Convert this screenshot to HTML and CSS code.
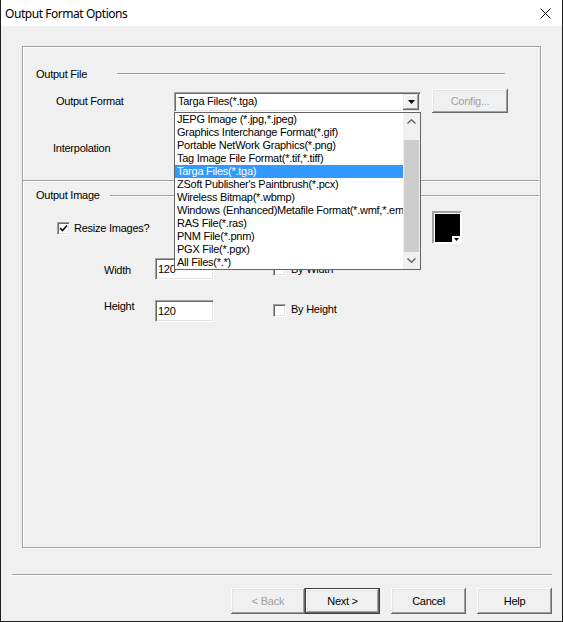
FILE: index.html
```html
<!DOCTYPE html>
<html>
<head>
<meta charset="utf-8">
<title>Output Format Options</title>
<link rel="stylesheet" href="styles.css">
</head>
<body>
<div class="window">
  <div class="titlebar">
    <span class="title">Output Format Options</span>
    <svg class="close" width="11" height="11" viewBox="0 0 11 11"><path d="M0.5 0.5 L10.5 10.5 M10.5 0.5 L0.5 10.5" stroke="#000" stroke-width="1" fill="none"/></svg>
  </div>
  <div class="client">
    <div class="frame">
      <div class="group group-file">
        <div class="heading"><span class="heading-text">Output File</span><span class="rule rule-file"></span></div>
        <div class="row row-format">
          <span class="label label-format">Output Format</span>
          <div class="combo">
            <span class="combo-text">Targa Files(*.tga)</span>
            <span class="combo-btn"><svg width="7" height="4" viewBox="0 0 7 4"><path d="M0 0 H7 L3.5 4 Z" fill="#000"/></svg></span>
            <div class="listbox">
              <ul class="items">
                <li>JEPG Image (*.jpg,*.jpeg)</li>
                <li>Graphics Interchange Format(*.gif)</li>
                <li>Portable NetWork Graphics(*.png)</li>
                <li>Tag Image File Format(*.tif,*.tiff)</li>
                <li class="selected">Targa Files(*.tga)</li>
                <li>ZSoft Publisher's Paintbrush(*.pcx)</li>
                <li>Wireless Bitmap(*.wbmp)</li>
                <li>Windows (Enhanced)Metafile Format(*.wmf,*.emf)</li>
                <li>RAS File(*.ras)</li>
                <li>PNM File(*.pnm)</li>
                <li>PGX File(*.pgx)</li>
                <li>All Files(*.*)</li>
              </ul>
              <div class="vscroll">
                <div class="sb-btn"><svg width="9" height="5" viewBox="0 0 9 5"><path d="M0.5 4.5 L4.5 0.8 L8.5 4.5" stroke="#606060" stroke-width="1.4" fill="none"/></svg></div>
                <div class="sb-track"><div class="sb-thumb"></div></div>
                <div class="sb-btn"><svg width="9" height="5" viewBox="0 0 9 5"><path d="M0.5 0.5 L4.5 4.2 L8.5 0.5" stroke="#606060" stroke-width="1.4" fill="none"/></svg></div>
              </div>
            </div>
          </div>
          <button class="btn btn-config" disabled>Config...</button>
        </div>
        <div class="row row-interp"><span class="label">Interpolation</span></div>
      </div>
      <div class="group group-image">
        <div class="heading"><span class="heading-text">Output Image</span><span class="rule rule-image"></span></div>
        <div class="row row-resize">
          <span class="check checked resize-check"><svg width="9" height="9" viewBox="0 0 9 9"><path d="M1 4 L3.5 6.5 L8 1.5" stroke="#000" stroke-width="1.6" fill="none"/></svg></span>
          <span class="check-label resize-label">Resize Images?</span>
          <span class="colorbox"><span class="color-notch"><svg width="5" height="3" viewBox="0 0 5 3"><path d="M0 0 H5 L2.5 3 Z" fill="#000"/></svg></span></span>
        </div>
        <div class="row row-width">
          <span class="label dim-label">Width</span>
          <span class="textbox">120</span>
          <span class="check dim-check"></span>
          <span class="check-label dim-check-label">By Width</span>
        </div>
        <div class="row row-height">
          <span class="label dim-label">Height</span>
          <span class="textbox">120</span>
          <span class="check dim-check"></span>
          <span class="check-label dim-check-label">By Height</span>
        </div>
      </div>
    </div>
    <div class="separator"></div>
    <div class="buttons">
      <button class="btn btn-back" disabled>&lt; Back</button>
      <button class="btn btn-default">Next &gt;</button>
      <button class="btn btn-cancel">Cancel</button>
      <button class="btn btn-help">Help</button>
    </div>
  </div>
</div>
</body>
</html>
```
FILE: styles.css
```css
* { box-sizing: border-box; }
html, body { margin: 0; padding: 0; background: #f0f0f0; }
.window {
  width: 563px;
  height: 622px;
  display: flex;
  flex-direction: column;
  background: #f0f0f0;
  border-left: 1px solid #1e1e1e;
  border-right: 1px solid #1e1e1e;
  border-bottom: 1px solid #1e1e1e;
  font-family: "Liberation Sans", Arial, sans-serif;
  font-size: 11px;
  letter-spacing: -0.25px;
  color: #000;
}
.titlebar {
  height: 26px;
  flex: none;
  background: #fff;
  display: flex;
  align-items: center;
  justify-content: space-between;
  padding-left: 4px;
}
.title {
  font-family: "Noto Sans", "Liberation Sans", sans-serif;
  font-size: 12px;
  letter-spacing: -0.45px;
}
.close { margin-right: 11px; display: block; }
.client { flex: 1; display: flex; flex-direction: column; }
.frame {
  margin: 20px 0 0 21px;
  width: 519px;
  height: 502px;
  border: 1px solid #a0a0a0;
  box-shadow: 1px 1px 0 #fff, inset 1px 1px 0 #fff;
  flex: none;
}
.group { width: 516px; }
.group-file {
  height: 134px;
  padding-top: 20px;
  border-bottom: 1px solid #a0a0a0;
  box-shadow: 0 1px 0 #fff;
}
.group-image { padding-top: 7px; }
.heading {
  display: flex;
  align-items: flex-start;
  height: 14px;
  padding-left: 13px;
  line-height: 14px;
}
.rule {
  height: 2px;
  margin-top: 6px;
  margin-left: auto;
  border-top: 1px solid #a0a0a0;
  border-bottom: 1px solid #fff;
}
.rule-file { width: 388px; margin-right: 34px; }
.rule-image { width: 429px; margin-top: 7px; }
.row { display: flex; align-items: flex-start; }
.row-format { margin-top: 8px; height: 24px; padding-left: 33px; }
.label-format { width: 118px; line-height: 24px; }
.combo {
  position: relative;
  margin-top: 3px;
  width: 247px;
  height: 20px;
  background: #fff;
  border: 1px solid;
  border-color: #a0a0a0 #fff #fff #a0a0a0;
  box-shadow: inset 1px 1px 0 #696969, inset -1px -1px 0 #e3e3e3;
  display: flex;
  align-items: flex-start;
}
.combo-text { flex: 1; padding-left: 3px; line-height: 17px; }
.combo-btn {
  width: 16px;
  height: 16px;
  margin: 1px 1px 0 0;
  background: #f0f0f0;
  box-shadow: inset -1px -1px 0 #696969, inset 1px 1px 0 #e3e3e3, inset -2px -2px 0 #a0a0a0, inset 2px 2px 0 #fff;
  display: flex;
  align-items: center;
  justify-content: center;
}
.combo-btn svg { display: block; }
.listbox {
  position: absolute;
  left: -1px;
  top: 19px;
  width: 247px;
  height: 158px;
  background: #fff;
  border: 1px solid #646464;
  display: flex;
  z-index: 10;
}
.items {
  flex: 1;
  margin: 0;
  padding: 0;
  list-style: none;
  overflow: hidden;
}
.items li {
  height: 13px;
  line-height: 13px;
  padding-left: 2px;
  white-space: nowrap;
  overflow: hidden;
}
.items li.selected { background: #3399ff; color: #fff; }
.vscroll {
  width: 17px;
  background: #f0f0f0;
  display: flex;
  flex-direction: column;
}
.sb-btn {
  height: 17px;
  display: flex;
  align-items: center;
  justify-content: center;
}
.sb-btn svg { display: block; }
.sb-track { flex: 1; }
.sb-thumb {
  margin: 10px 1px 0 1px;
  height: 112px;
  background: #cdcdcd;
}
.btn {
  font-family: inherit;
  font-size: 11px;
  letter-spacing: -0.25px;
  color: #000;
  padding: 0;
  border: none;
  background: #f0f0f0;
  width: 75px;
  height: 26px;
  box-shadow: inset -1px -1px 0 #696969, inset 1px 1px 0 #fff, inset -2px -2px 0 #a0a0a0, inset 2px 2px 0 #e3e3e3;
}
.btn:disabled { color: #a0a0a0; }
.btn-config { margin-left: 11px; width: 76px; height: 24px; }
.row-interp { margin-top: 28px; padding-left: 30px; line-height: 14px; }
.row-resize { margin-top: 9px; height: 33px; padding-left: 34px; }
.check {
  width: 13px;
  height: 13px;
  flex: none;
  background: #fff;
  border: 1px solid;
  border-color: #a0a0a0 #fff #fff #a0a0a0;
  box-shadow: inset 1px 1px 0 #696969, inset -1px -1px 0 #e3e3e3;
  display: flex;
  align-items: center;
  justify-content: center;
}
.check svg { display: block; }
.resize-check { margin-top: 11px; }
.check-label { line-height: 13px; }
.resize-label { margin-top: 11px; margin-left: 4px; }
.colorbox {
  margin-left: auto;
  margin-right: 77px;
  width: 30px;
  height: 33px;
  background: #000;
  border: 2px solid;
  border-color: #a0a0a0 #fff #fff #a0a0a0;
  box-shadow: inset 1px 1px 0 #fff;
  display: flex;
  align-items: flex-end;
  justify-content: flex-end;
}
.color-notch {
  width: 8px;
  height: 6px;
  background: #fff;
  display: flex;
  align-items: center;
  justify-content: center;
}
.color-notch svg { display: block; }
.row-width { margin-top: 14px; height: 22px; padding-left: 81px; }
.row-height { margin-top: 20px; height: 22px; padding-left: 81px; }
.dim-label { width: 51px; line-height: 13px; }
.row-width .dim-label { margin-top: 6px; }
.row-height .dim-label { margin-top: 0; }
.textbox {
  width: 59px;
  height: 22px;
  background: #fff;
  border: 1px solid;
  border-color: #a0a0a0 #fff #fff #a0a0a0;
  box-shadow: inset 1px 1px 0 #696969, inset -1px -1px 0 #e3e3e3;
  padding-left: 2px;
  line-height: 20px;
}
.dim-check { margin-left: 59px; }
.row-width .dim-check { margin-top: 5px; }
.row-height .dim-check { margin-top: 4px; }
.dim-check-label { margin-left: 5px; }
.row-width .dim-check-label { margin-top: 5px; }
.row-height .dim-check-label { margin-top: 3px; }
.separator {
  margin: 26px 0 0 11px;
  width: 540px;
  height: 2px;
  border-top: 1px solid #a0a0a0;
  border-bottom: 1px solid #fff;
}
.buttons {
  margin-top: 12px;
  display: flex;
  justify-content: flex-end;
  padding-right: 10px;
}
.btn-back { width: 74px; }
.btn-default {
  box-shadow: inset 0 0 0 1px #3c3c3c, inset -2px -2px 0 #696969, inset 2px 2px 0 #fff, inset -3px -3px 0 #a0a0a0, inset 3px 3px 0 #e3e3e3;
}
.btn-cancel { margin-left: 11px; }
.btn-help { margin-left: 11px; }
```
